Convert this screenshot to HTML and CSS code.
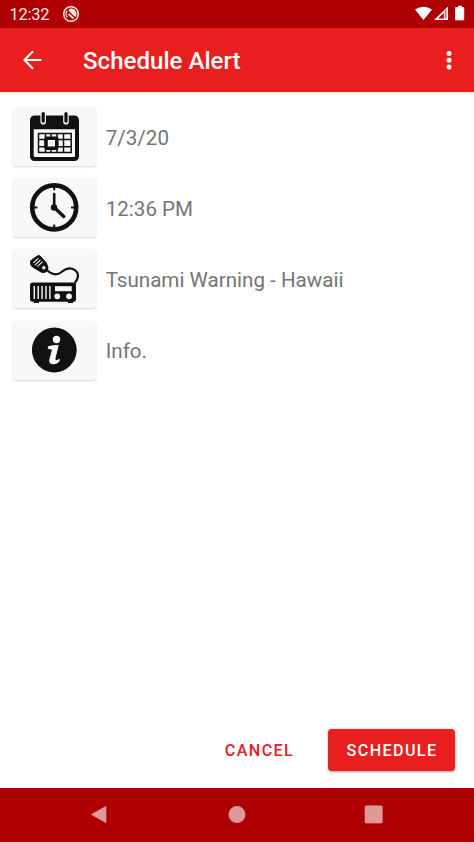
FILE: index.html
```html
<!DOCTYPE html>
<html lang="en">
<head>
<meta charset="utf-8">
<title>Schedule Alert</title>
<link rel="stylesheet" href="styles.css">
</head>
<body>
<div class="screen">
  <div class="status">
    <span class="clock">12:32</span>
    <svg class="notice" width="18" height="18" viewBox="0 0 18 18" fill="none" stroke="#ffe9e4">
      <circle cx="9" cy="9" r="7.300" stroke-width="1.500"/>
      <path d="M5.300 12.200A4.800 4.800 0 0 1 5.300 5.700M7 4.600A4.800 4.800 0 0 1 13 11.600" stroke-width="1.300"/>
      <path d="M6.500 9 11.500 13.500" stroke-width="1.700"/>
      <path d="M6.700 5.700a4 4 0 0 1 5.800 5.800z" fill="#ffe9e4" stroke="none"/>
    </svg>
    <svg class="signals" width="52" height="18" viewBox="0 0 52 18" fill="#fff">
      <path d="M0 4.500Q8.500-1 17 4.500L8.500 15z"/>
      <path d="M33 1.500V15H19z"/>
      <path d="M28.800 8V13.600H23.100z" fill="#ae0000"/>
      <path d="M29.600 5.500V13.600H31.600V4z" fill="#ae0000" opacity=".55"/>
      <path d="M43.500 1h3v1.500h2.300v12.500h-8.300V2.500h3z" stroke="#fff" stroke-width=".7" stroke-linejoin="round"/>
    </svg>
  </div>
  <header class="appbar">
    <svg class="back" width="20" height="20" viewBox="0 0 20 20" fill="none" stroke="#fff" stroke-width="2.100"><path d="M18.500 9H2.500M10 .3 1.500 9l8.500 8.700"/></svg>
    <h1>Schedule Alert</h1>
    <svg class="more" width="6" height="20" viewBox="0 0 6 20" fill="#fff"><circle cx="3" cy="2.500" r="2.500"/><circle cx="3" cy="9.200" r="2.500"/><circle cx="3" cy="16" r="2.500"/></svg>
  </header>
  <main>
    <div class="row">
      <div class="tile"><svg width="84" height="59" viewBox="0 0 84 59">
        <rect x="18" y="8.500" width="49" height="45.500" rx="4.500" fill="#111"/>
        <path d="M21.700 22.300H63v26.200q0 1.500-1.500 1.500H23.200q-1.500 0-1.500-1.500z" fill="#f8f8f8"/>
        <g stroke-linecap="round"><path d="M31.200 7.500v7.300M54 7.500v7.300" stroke="#f8f8f8" stroke-width="5.600"/><path d="M31.200 6.600v7.600M54 6.600v7.600" stroke="#111" stroke-width="3.200"/></g>
        <path d="M26.500 26.500h32.700v19H26.500zM26.500 32.500h32.700M26.500 39.700h32.700M33.500 26.500v19M39 26.500v19M45 26.500v19M51.500 26.500v19" fill="none" stroke="#111" stroke-width="1.500"/>
        <rect x="34" y="31.300" width="10.800" height="10" rx="1" fill="#f8f8f8" stroke="#111" stroke-width="3.600"/>
      </svg></div><span>7/3/20</span>
    </div>
    <div class="row">
      <div class="tile"><svg width="84" height="59" viewBox="0 0 84 59" fill="none" stroke="#111">
        <circle cx="42.200" cy="29.400" r="22" stroke-width="4.600"/>
        <path d="M42.200 9v3.300M42.200 46.500v3.300M21.800 29.400h3.600M59 29.400h3.600" stroke-width="2"/>
        <path d="M42.200 16v13.400" stroke-width="2.600" stroke-linecap="round"/><path d="M42.200 29.400l9.600 9" stroke-width="3.400" stroke-linecap="round"/>
        <circle cx="42" cy="29.400" r="3.200" fill="#111" stroke="none"/>
      </svg></div><span>12:36 PM</span>
    </div>
    <div class="row">
      <div class="tile"><svg width="84" height="59" viewBox="0 0 84 59" fill="none" stroke="#111">
        <path d="M35.300 21.500C41 26.500 45 26.500 49.500 23C55 18.500 60 18.300 64 22C67.500 25.500 66 30 62.800 34" stroke-width="2.200"/>
        <path d="M19.800 10.800 25.500 6.800Q26.500 6 28 7L34 13.500Q36.800 18 35.600 21.500Q33.500 24.200 29.800 23.400L20.500 18Q18.600 17 18.500 13Q18.500 11.800 19.800 10.800z" fill="#111" stroke-width="1"/>
        <path d="M21.300 13.800 26.300 9.300M22.900 16.100 28.500 11M25.500 17.400 30.500 12.800" stroke="#f8f8f8" stroke-width="1.100"/>
        <circle cx="31.800" cy="18.700" r="1.700" fill="#f8f8f8" stroke="none"/>
        <rect x="18" y="33.500" width="46" height="19.300" rx="2.500" fill="#111" stroke="none"/>
        <path d="M22 51.500h5v2.500h-5zM56 51.500h5v2.500h-5z" fill="#111" stroke="none"/>
        <path d="M22.300 37v13M26.200 37v13M30.100 37v13M34 37v13M37.900 37v13" stroke="#f8f8f8" stroke-width="1.400"/>
        <path d="M43 37.200h16.700v5H43z" fill="#f8f8f8" stroke="none"/>
        <circle cx="45.300" cy="47.300" r="2.900" fill="#f8f8f8" stroke="none"/><circle cx="57" cy="47.300" r="2.900" fill="#f8f8f8" stroke="none"/>
      </svg></div><span>Tsunami Warning - Hawaii</span>
    </div>
    <div class="row">
      <div class="tile"><svg width="84" height="59" viewBox="0 0 84 59">
        <circle cx="42.300" cy="29" r="22.400" fill="#111"/>
        <circle cx="44.500" cy="18.500" r="3.700" fill="#f8f8f8"/>
        <path d="M36.200 25.700Q40 24.500 46.200 24.500L43 37.300Q42.500 39.700 44.500 39.500L47.500 38.500Q47.500 41 44.500 42.200Q37 44.500 37.700 39L40.200 29.500Q40.500 27.500 36.500 27.700z" fill="#f8f8f8" stroke="#f8f8f8" stroke-width=".9" stroke-linejoin="round"/>
      </svg></div><span>Info.</span>
    </div>
  </main>
  <footer class="actions">
    <button class="cancel">CANCEL</button>
    <button class="schedule">SCHEDULE</button>
  </footer>
  <nav class="nav">
    <svg width="20" height="20" viewBox="0 0 20 20"><path d="M.3 9.500 15 1.300v16.400z" stroke-linejoin="round"/></svg>
    <svg width="20" height="20" viewBox="0 0 20 20"><circle cx="10" cy="9.500" r="8.200"/></svg>
    <svg width="20" height="20" viewBox="0 0 20 20"><rect x="1" y=".8" width="17.300" height="17.300" rx="1.500"/></svg>
  </nav>
</div>
</body>
</html>
```
FILE: styles.css
```css
* { box-sizing: border-box; }
body { margin: 0; font-family: Roboto, sans-serif; background: #fff; }
svg { display: block; flex: none; }
.screen { width: 474px; height: 842px; display: flex; flex-direction: column; overflow: hidden; }
.status { height: 27.500px; flex: none; display: flex; align-items: center; background: #ae0000; color: #ffe9e4; padding: 1px 7px 0 9.500px; }
.clock { font-size: 16.400px; width: 52px; letter-spacing: -.2px; padding-top: 1px; }
.signals { margin-left: auto; }
.appbar { height: 64px; flex: none; display: flex; align-items: center; background: #e91e1e; color: #fff; padding: 2px 22px 0 23px; box-shadow: 0 1px 2px rgba(0,0,0,.12); }
.appbar h1 { margin: 0 0 0 40px; font-size: 24.100px; font-weight: 500; line-height: 28px; white-space: nowrap; }
.more { margin-left: auto; }
main { flex: 1; padding: 15.500px 12px 0 13px; display: flex; flex-direction: column; gap: 12.200px; }
.row { display: flex; align-items: center; gap: 9.700px; height: 59px; font-size: 20.600px; color: #757575; white-space: nowrap; }
.row span { padding-top: 2px; }
.tile { width: 83px; height: 59px; background: #f8f8f8; border-radius: 3px; box-shadow: 0 1px 2px rgba(0,0,0,.16); }
.tile svg { margin-left: -1px; }
.actions { height: 59px; flex: none; display: flex; justify-content: flex-end; align-items: flex-start; padding-right: 19px; gap: 16px; }
button { border: 0; height: 42px; font: 500 16.200px/42px Roboto, sans-serif; letter-spacing: 1.350px; padding: 1px 0 0 1px; text-align: center; white-space: nowrap; }
.cancel { width: 106px; background: none; color: #e02127; }
.schedule { width: 127px; background: #e91e1e; color: #fff; border-radius: 4px; box-shadow: 0 1px 3px rgba(0,0,0,.4); }
.nav { height: 54px; flex: none; display: flex; align-items: center; justify-content: center; gap: 116.500px; background: #ae0000; }
.nav svg { fill: #df9999; stroke: #df9999; stroke-width: .6; }
```
